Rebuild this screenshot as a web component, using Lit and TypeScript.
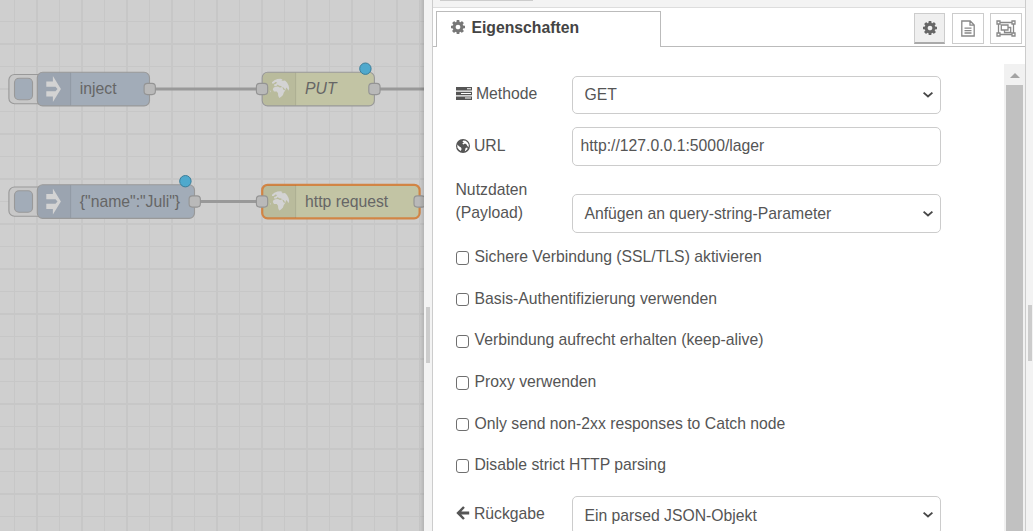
import { LitElement, html, svg, css } from "lit";
import { customElement } from "lit/decorators.js";

const COG = "M1152 896q0-106-75-181t-181-75-181 75-75 181 75 181 181 75 181-75 75-181zm512-109v222q0 12-8 23t-20 13l-185 28q-19 54-39 91 35 50 107 138 10 12 10 25t-9 23q-27 37-99 108t-94 71q-12 0-26-9l-138-108q-44 23-91 38-16 136-29 186-7 28-36 28h-222q-14 0-24.5-8.5t-11.5-21.5l-28-184q-49-16-90-37l-141 107q-10 9-25 9-14 0-25-11-126-114-165-168-7-10-7-23 0-12 8-23 15-21 51-66.5t54-70.5q-27-50-41-99l-183-27q-13-2-21-12.5t-8-23.5v-222q0-12 8-23t19-13l186-28q14-46 39-92-40-57-107-138-10-12-10-24 0-10 9-23 26-36 98.5-107.5t94.5-71.5q13 0 26 10l138 107q44-23 91-38 16-136 29-186 7-28 36-28h222q14 0 24.5 8.5t11.5 21.5l28 184q49 16 90 37l142-107q9-9 24-9 13 0 25 10 129 119 165 170 7 8 7 22 0 12-8 23-15 21-51 66.5t-54 70.5q26 50 41 98l183 28q13 2 21 12.5t8 23.5z";

const cog = (size: number) => html`<svg class="icon" width=${size} height=${size} viewBox="128 128 1536 1536"><path d=${COG} /></svg>`;
const chevron = html`<svg class="chevron" width="12" height="8" viewBox="0 0 12 8"><path d="M1.6 1.6L6 5.4L10.4 1.6" /></svg>`;

/* Europe, Asia and Africa, drawn in a 20 x 20 box */
const CONTINENTS = "M2.6 3.6L5 1.6L8 .3L11 .1L13.2 .8L12 1.8L13.6 2.2L15.6 2L17.6 4L19.2 7L19.8 10L19 12.2L18 10.2L16.8 8.8L16 11.6L14.4 9.2L12.8 8.4L14.2 11.4L16 11.6L14.4 14L13.6 16.4L11.6 18.4L9.8 19.3L8.8 17.2L8.6 14.6L7.4 13L4.6 12.8L3.4 11L4 9.2L6 8.2L8.6 8L10.4 8.8L12.2 8.6L12 7.4L9.8 7.2L8.2 5.8L7.4 7.2L5 7.6L4.6 6L6.4 5.4L7.8 4L6 3.4L4.4 4.8L2.6 5Z M.3 11.5L1.4 12.6L.9 14Z";

@customElement("flow-canvas")
export class FlowCanvas extends LitElement {
  static styles = css`
    :host { display: block; overflow: hidden; background: #cfcfcf; }
    svg { display: block; }
    text { font: 15.75px "Liberation Sans", Arial, sans-serif; fill: #666; }
    .italic { font-style: italic; }
    .line { stroke: #c7c7c7; stroke-width: 1.125; }
    .line.wide { stroke-width: 1.9; }
    .wire { stroke: #999; stroke-width: 3.2; fill: none; }
    .node { stroke: #999; stroke-width: 1.125; }
    .blue { fill: #a2acb8; }
    .green { fill: #c2c4a4; }
    .selected { stroke: #d28545; stroke-width: 2.2; }
    .shade { fill: #000; fill-opacity: 0.045; }
    .divider { stroke: #000; stroke-opacity: 0.07; }
    .port { fill: #b9b9b9; stroke: #949494; stroke-width: 1.125; }
    .button { fill: #c8c8c8; stroke: #999; stroke-width: 1.125; }
    .glyph { fill: #d3d3d3; }
    .changed { fill: #4fa9cd; stroke: #3b7d99; stroke-width: 1; }
  `;

  private port(x: number, y: number) {
    return svg`<rect class="port" x=${x - 5.6} y=${y - 5.6} width="11.25" height="11.25" rx="3.3" />`;
  }

  private inject(y: number, width: number, label: string) {
    return svg`
      <rect class="button" x="8.9" y=${y - 14.5} width="36" height="29.3" rx="5.6" />
      <rect class="node blue" x="14.5" y=${y - 10.7} width="18" height="21.4" rx="4.5" />
      <rect class="node blue" x="37.3" y=${y - 16.7} width=${width} height="33.6" rx="5.4" />
      <path class="shade" d="M71 ${y - 16.2}H43a5.2 5.2 0 0 0-5.2 5.2v22a5.2 5.2 0 0 0 5.2 5.2h28z" />
      <path class="divider" d="M70.7 ${y - 16.2}v32.4" />
      <path class="glyph" d="M46.3 ${y - 7.4}h6.6v-5.5l8 12.9l-8 12.9v-5.5h-6.6v-5.2h9.2l2-2.2l-2-2.2h-9.2z" />
      ${this.port(37.3 + width + 0.2, y)}
      <text x="79.8" y=${y + 5}>${label}</text>`;
  }

  private request(y: number, width: number, label: string, cls: string, textCls: string) {
    return svg`
      <rect class="node green ${cls}" x="262.2" y=${y - 16.7} width=${width} height="33.6" rx="5.4" />
      <path class="shade" d="M296 ${y - 16.2}h-28a5.2 5.2 0 0 0-5.2 5.2v22a5.2 5.2 0 0 0 5.2 5.2h28z" />
      <path class="divider" d="M295.7 ${y - 16.2}v32.4" />
      <path class="glyph" transform="translate(269.4 ${y - 10.4})" d=${CONTINENTS} />
      ${this.port(262, y)}
      ${this.port(262.2 + width, y)}
      <text class=${textCls} x="305" y=${y + 5}>${label}</text>`;
  }

  render() {
    const cols = Array.from({ length: 19 }, (_, i) => 14.5 + i * 22.5);
    const rows = Array.from({ length: 24 }, (_, i) => -1 + i * 22.5);
    const cls = (v: number) => (Number.isInteger(v) ? "line wide" : "line");
    return html`<svg width="424" height="531" viewBox="0 0 424 531">
      ${cols.map((x) => svg`<line class=${cls(x)} x1=${x} y1="0" x2=${x} y2="531" />`)}
      ${rows.map((y) => svg`<line class=${cls(y)} x1="0" y1=${y} x2="424" y2=${y} />`)}
      <path class="wire" d="M149.5 89H262M374.5 89H424M194.5 201.5H262" />
      ${this.inject(89, 112.2, "inject")}
      ${this.inject(201.5, 157.2, '{"name":"Juli"}')}
      ${this.request(89, 112.2, "PUT", "", "italic")}
      ${this.request(201.5, 157.4, "http request", "selected", "")}
      <circle class="changed" cx="365.4" cy="68.7" r="5.7" />
      <circle class="changed" cx="185.4" cy="181.2" r="5.7" />
    </svg>`;
  }
}

@customElement("app-root")
export class AppRoot extends LitElement {
  static styles = css`
    :host {
      display: grid;
      grid-template-columns: 424px 8px 594px 7px;
      width: 1033px;
      height: 531px;
      overflow: hidden;
      background: #f3f3f3;
      color: #555;
      font: 15.75px/22.5px "Liberation Sans", Arial, sans-serif;
    }
    * { box-sizing: border-box; }
    svg { display: block; flex: none; }
    .icon { fill: currentColor; }
    .canvas { height: 531px; }
    .canvas-wrap { display: grid; grid-template: 100% / 100%; }
    .canvas-wrap > * { grid-area: 1 / 1; }
    .edge { width: 5px; justify-self: end; z-index: 1; background: linear-gradient(to right, rgba(0, 0, 0, 0), rgba(0, 0, 0, 0.13)); }
    .separator { display: flex; align-items: flex-start; justify-content: center; padding-top: 307px; background: #f3f3f3; }
    .separator.right { padding-top: 305px; padding-left: 1px; }
    .grip { width: 4px; height: 56px; background: #ccc; }
    .panel { display: flex; flex-direction: column; height: 531px; border: solid #ccc; border-width: 0 1px; background: #fff; min-width: 0; }
    .panel-top { height: 8px; flex: none; padding-left: 7px; background: #f3f3f3; border-bottom: 1px solid #ddd; }
    .panel-top-button { width: 93px; height: 1px; background: #ccc; }
    .tabs { display: flex; flex: none; height: 39px; padding-top: 3px; }
    .lead { width: 3px; border-bottom: 1px solid #bbb; }
    .tab { display: flex; align-items: flex-start; width: 225px; padding: 5px 0 0 14px; border: solid #bbb; border-width: 1px 1px 0; color: #444; font-weight: bold; }
    .tab .icon { margin: 3px 6.4px 0 0; color: #777; }
    .tools { display: flex; flex: 1; gap: 6px; justify-content: flex-end; padding: 2px 3px 0 0; border-bottom: 1px solid #bbb; }
    .tool { display: flex; align-items: center; justify-content: center; width: 32px; height: 31px; border: 1px solid #ccc; color: #888; }
    .tool.on { width: 31px; margin-right: 1px; background: #efefef; border-bottom: 2px solid #aaa; color: #666; }
    .stroke { fill: none; stroke: currentColor; stroke-width: 1.3; }
    .body { display: flex; flex: 1; padding-top: 17px; min-height: 0; }
    .form { flex: 1; padding: 12px 0 0 22.5px; overflow: hidden; }
    .row { display: flex; height: 38px; margin-bottom: 13px; }
    .row.url { height: 39px; margin-bottom: 11px; }
    .row.payload { height: 56px; margin-bottom: 13px; align-items: flex-end; }
    .label { display: flex; align-items: center; width: 116.5px; height: 36px; flex: none; }
    .url .label { height: 39px; }
    .payload .label { align-items: flex-start; height: 54px; }
    .label .icon { margin: -2px 4.4px 0 0; }
    .field { display: flex; align-items: center; justify-content: space-between; width: 369px; height: 38px; padding: 0 6px 0 11.4px; border: 1px solid #ccc; border-radius: 5px; }
    .url .field { height: 39px; padding: 0 0 1px 7.4px; }
    .payload .field { height: 39px; }
    .payload .field span, .return .field span { padding-top: 1px; }
    .chevron { fill: none; stroke: #484848; stroke-width: 1.9; }
    .check { display: flex; align-items: center; height: 22.5px; margin-bottom: 19.15px; gap: 5px; }
    .box { width: 13.5px; height: 13.5px; margin: 1.5px .5px 0 0; border: 1px solid #6f6f6f; border-radius: 3px; background: #fff; }
    .return .label { height: 37px; }
    .return .field { height: 39px; }
    .scroll { display: flex; flex-direction: column; align-items: center; width: 21px; background: #f1f1f1; flex: none; }
    .arrow { width: 0; height: 0; margin: 9px 0 7px; border: solid transparent; border-width: 0 5px 5px; border-bottom-color: #a3a3a3; }
    .thumb { width: 17px; flex: 1; background: #c1c1c1; }
  `;

  private select(text: string) {
    return html`<div class="field"><span>${text}</span>${chevron}</div>`;
  }

  render() {
    const checks = [
      "Sichere Verbindung (SSL/TLS) aktivieren",
      "Basis-Authentifizierung verwenden",
      "Verbindung aufrecht erhalten (keep-alive)",
      "Proxy verwenden",
      "Only send non-2xx responses to Catch node",
      "Disable strict HTTP parsing",
    ];
    return html`
      <div class="canvas-wrap"><flow-canvas class="canvas"></flow-canvas><div class="edge"></div></div>
      <div class="separator"><div class="grip"></div></div>
      <div class="panel">
        <div class="panel-top"><div class="panel-top-button"></div></div>
        <div class="tabs">
          <div class="lead"></div>
          <div class="tab">${cog(14)}<span>Eigenschaften</span></div>
          <div class="tools">
            <div class="tool on">${cog(14)}</div>
            <div class="tool">
              <svg class="stroke" width="14" height="17" viewBox="0 0 14 17"><path d="M.8 1h8.4l4 4v11H.8zM9 1v4.2h4M3.5 8.2h7M3.5 10.6h7M3.5 13h7" /></svg>
            </div>
            <div class="tool">
              <svg class="stroke" width="20" height="17" viewBox="0 0 20 17"><path d="M2.5 4v9M17.5 4v9M4 2.5h12M4 14.5h12M1 1h3v3H1zM16 1h3v3h-3zM1 13h3v3H1zM16 13h3v3h-3zM5.3 5h6.7v5H5.3zM12 7.5h2.7v5H8.5V10" /></svg>
            </div>
          </div>
        </div>
        <div class="body">
          <div class="form">
            <div class="row">
              <div class="label">
                <svg class="icon" width="16" height="13" viewBox="0 0 16 13"><path fill-rule="evenodd" d="M0 0h16v3.5H0zM11 1.2v1h4v-1zM0 4.7h16v3.5H0zM5 5.9v1h10v-1zM0 9.4h16v3.5H0zM9 10.6v1h6v-1z" /></svg>
                <span>Methode</span>
              </div>
              ${this.select("GET")}
            </div>
            <div class="row url">
              <div class="label">
                <svg class="icon" width="14" height="14" viewBox="0 0 14 14"><path fill-rule="evenodd" d="M7 0a7 7 0 1 0 0 14A7 7 0 0 0 7 0zM7.4 1.4L9.6 1.7L11.6 3.4L12.8 5.8L12.6 8.2L11.4 7L10.6 5.4L9 4.6L7.4 5.6L6.2 4.8L7.8 3.4L6.4 2.4zM1.3 5.6L3 7.2L5 8.4L5.6 10L4.8 12L2.8 10.6L1.4 8.4zM9.6 9L11.2 8.6L11.6 10L9.8 11.8L8.8 12.2z" /></svg>
                <span>URL</span>
              </div>
              <div class="field">http://127.0.0.1:5000/lager</div>
            </div>
            <div class="row payload">
              <div class="label"><span>Nutzdaten<br />(Payload)</span></div>
              ${this.select("Anfügen an query-string-Parameter")}
            </div>
            ${checks.map((c) => html`<div class="check"><span class="box"></span><span>${c}</span></div>`)}
            <div class="row return">
              <div class="label">
                <svg class="icon" width="14" height="14" viewBox="0 0 14 14"><path d="M7.6 .6L8.8 1.8L5.3 5.5H13.2V8.5H5.3L8.8 12.2L7.6 13.4H6.8L.3 7L6.8 .6z" /></svg>
                <span>Rückgabe</span>
              </div>
              ${this.select("Ein parsed JSON-Objekt")}
            </div>
          </div>
          <div class="scroll"><div class="arrow"></div><div class="thumb"></div></div>
        </div>
      </div>
      <div class="separator right"><div class="grip"></div></div>
    `;
  }
}
